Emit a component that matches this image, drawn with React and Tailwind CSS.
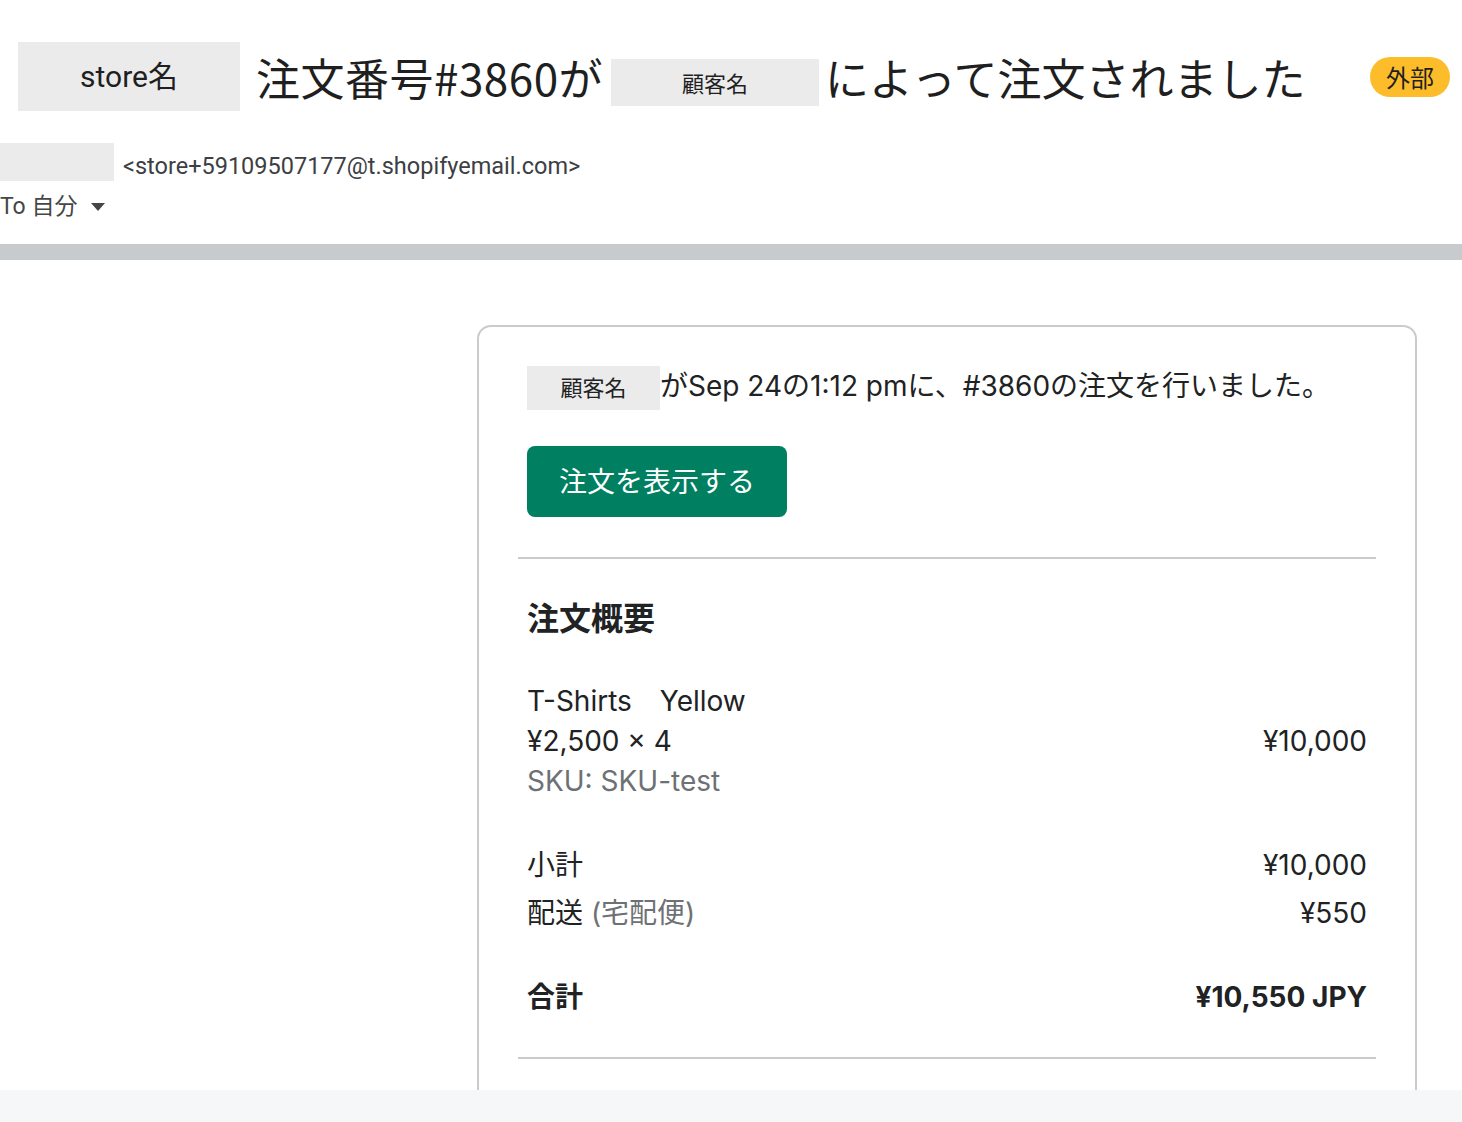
import React from "react";

const cjk = "font-['Inter','Noto_Sans_CJK_JP',sans-serif]";

export default function App() {
  return (
    <div className="w-[1462px] h-[1122px] bg-white overflow-hidden flex flex-col">
      {/* Header */}
      <div className="pt-[42px] font-['Roboto','Noto_Sans_CJK_JP',sans-serif]">
        <div className="flex items-center h-[69px]">
          <div className="ml-[18px] w-[222px] h-[69px] bg-[#ebebeb] flex items-center justify-center text-[30px] text-[#1f1f1f]">
            store名
          </div>
          <div className="ml-[16px] flex items-center whitespace-nowrap text-[44px] leading-[60px] text-[#1f1f1f] font-['Noto_Sans_CJK_JP',sans-serif]">
            <span className="tracking-[0.5px]">注文番号#3860が</span>
            <span className="ml-[8px] mr-[6px] w-[208px] h-[47px] mt-[11px] bg-[#ebebeb] flex items-center justify-center text-[22px] text-[#1f1f1f]">
              顧客名
            </span>
            <span>によって注文されました</span>
          </div>
          <div className="ml-auto mr-[12px] h-[40px] px-[16px] rounded-full bg-[#fdbd2b] flex items-center text-[24px] text-[#1f1f1f] font-['Noto_Sans_CJK_JP',sans-serif]">
            外部
          </div>
        </div>
        <div className="mt-[32px] flex items-center h-[38px]">
          <div className="w-[114px] h-[38px] bg-[#ebebeb]" />
          <span className="ml-[9px] mt-[10px] text-[23.5px] text-[#3c4043]">
            &lt;store+59109507177@t.shopifyemail.com&gt;
          </span>
        </div>
        <div className="mt-[11px] flex items-center h-[30px] text-[23px] text-[#444746]">
          <span>To 自分</span>
          <svg className="ml-[13px]" width="16" height="10" viewBox="0 0 16 10">
            <path d="M1 1 L15 1 L8 9 Z" fill="#444746" />
          </svg>
        </div>
      </div>
      <div className="mt-[22px] h-[16px] bg-[#c8cbcd]" />

      {/* Content */}
      <div className={`h-[830px] overflow-hidden bg-white ${cjk} text-[#202223]`}>
        <div className="mt-[65px] ml-[477px] w-[940px] border-2 border-[#c9cccf] rounded-[14px] pt-[39px] px-[39px]">
          <div className="px-[9px]">
            <div className="flex items-center h-[40px] text-[28px] whitespace-nowrap">
              <span className="w-[133px] h-[44px] mt-[4px] bg-[#ebebeb] flex items-center justify-center text-[22px] shrink-0">
                顧客名
              </span>
              <span>がSep 24の1:12 pmに、#3860の注文を行いました。</span>
            </div>
            <div className="mt-[40px] w-[260px] h-[71px] rounded-[8px] bg-[#008060] text-white text-[28px] flex items-center pl-[32px]">
              注文を表示する
            </div>
          </div>
          <div className="mt-[40px] h-[2px] bg-[#c9cccf]" />
          <div className="px-[9px]">
            <div className="mt-[40px] h-[40px] flex items-center text-[32px] font-bold">注文概要</div>
            <div className="mt-[42px] text-[28px] leading-[40px]">
              <div>T-Shirts　Yellow</div>
              <div className="flex justify-between">
                <span>¥2,500 × 4</span>
                <span>¥10,000</span>
              </div>
              <div className="text-[#6d7175]">SKU: SKU-test</div>
            </div>
            <div className="mt-[40px] text-[28px]">
              <div className="h-[48px] flex items-center justify-between">
                <span>小計</span>
                <span>¥10,000</span>
              </div>
              <div className="h-[48px] flex items-center justify-between">
                <span>
                  配送 <span className="text-[#6d7175]">(宅配便)</span>
                </span>
                <span>¥550</span>
              </div>
            </div>
            <div className="mt-[40px] h-[40px] flex items-center justify-between text-[28px] font-bold">
              <span>合計</span>
              <span>¥10,550 JPY</span>
            </div>
          </div>
          <div className="mt-[40px] h-[2px] bg-[#c9cccf]" />
          <div className="h-[200px]" />
        </div>
      </div>
      <div className="flex-1 bg-[#f6f7f9]" />
    </div>
  );
}
